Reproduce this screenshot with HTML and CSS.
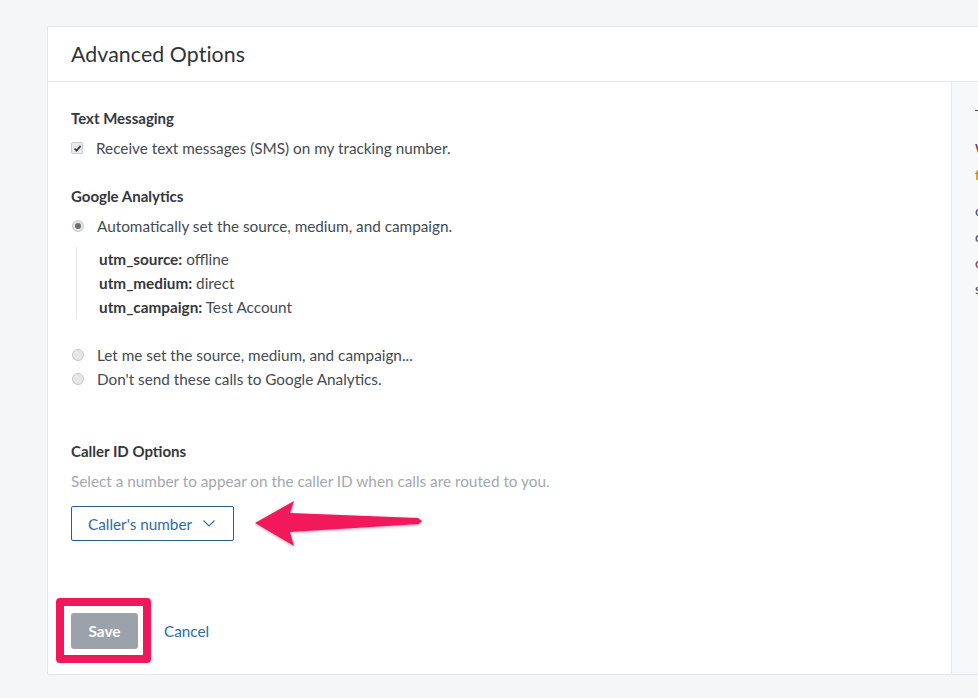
FILE: index.html
```html
<!DOCTYPE html>
<html>
<head>
<meta charset="utf-8">
<link rel="stylesheet" href="styles.css">
</head>
<body>
<div class="page">
  <div class="card">
    <div class="card-header">
      <h2 class="title">Advanced Options</h2>
    </div>
    <div class="card-body">
      <div class="main">
        <h3 class="label">Text Messaging</h3>
        <div class="option">
          <span class="checkbox"><svg width="11" height="11" viewBox="0 0 11 11"><path d="M2.6 5.6 L4.6 7.6 L8.6 2.8" fill="none" stroke="#3a3f45" stroke-width="1.8"/></svg></span>
          <span>Receive text messages (SMS) on my tracking number.</span>
        </div>

        <h3 class="label gap">Google Analytics</h3>
        <div class="option">
          <span class="radio checked"></span>
          <span>Automatically set the source, medium, and campaign.</span>
        </div>
        <div class="utm">
          <div><b>utm_source:</b> offline</div>
          <div><b>utm_medium:</b> direct</div>
          <div><b>utm_campaign:</b> Test Account</div>
        </div>
        <div class="option spaced">
          <span class="radio"></span>
          <span>Let me set the source, medium, and campaign...</span>
        </div>
        <div class="option">
          <span class="radio"></span>
          <span>Don't send these calls to Google Analytics.</span>
        </div>

        <h3 class="label biggap">Caller ID Options</h3>
        <p class="hint">Select a number to appear on the caller ID when calls are routed to you.</p>
        <div class="dropdown-row">
          <button class="dropdown">Caller's number <svg class="chev" width="12" height="7" viewBox="0 0 12 7"><path d="M0.5 0.5 L6 6 L11.5 0.5" fill="none" stroke="#2f6aa6" stroke-width="1.1"/></svg></button>
          <svg class="arrow" width="180" height="60" viewBox="0 0 180 60"><polygon points="3,23 42,1 38,13 166,18 170,21 167,24 38,32 42,46" fill="#f2185c"/></svg>
        </div>

        <div class="actions">
          <div class="highlight"><button class="save">Save</button></div>
          <a class="cancel">Cancel</a>
        </div>
      </div>
      <div class="side">
        <p class="s1">The</p>
        <p class="s2">We</p>
        <p class="s3">fo</p>
        <p class="s4">on</p>
        <p class="s5">co</p>
        <p class="s6">ca</p>
        <p class="s7">se</p>
      </div>
    </div>
  </div>
</div>
</body>
</html>
```

FILE: styles.css
```css
* { box-sizing: border-box; }
html, body { margin: 0; padding: 0; }
body {
  background: #f5f6f8;
  font-family: "Lato", "Liberation Sans", sans-serif;
  font-size: 15.3px;
  color: #444a50;
  width: 978px;
  height: 698px;
  overflow: hidden;
}
.page {
  padding: 26px 0 0 47px;
}
.card {
  width: 960px;
  background: #fff;
  border: 1px solid #e3e6ea;
  border-radius: 2px;
}
.card-header {
  height: 55px;
  border-bottom: 1px solid #e5e8eb;
  padding: 0 23px;
  display: flex;
  align-items: center;
}
.title {
  margin: 0;
  font-size: 21.3px;
  font-weight: 400;
  color: #2f3438;
  letter-spacing: 0.1px;
}
.card-body {
  display: flex;
  height: 592px;
}
.main {
  width: 903px;
  padding: 24px 23px 0 23px;
}
.side {
  flex: 1;
  background: #f6f8fa;
  border-left: 1px solid #e6e9ec;
  padding: 20px 0 0 23px;
  font-size: 14px;
  white-space: nowrap;
  overflow: hidden;
}
.side p { margin: 0; line-height: 26px; color: #444; }
.side .s1 { margin-bottom: 8px; }
.side .s2 { color: #6b2d3a; }
.side .s3 { color: #b5741e; margin-bottom: 10px; }
.side .s6 { color: #8a2a1a; }
.label {
  margin: 0;
  font-size: 15px;
  font-weight: 700;
  line-height: 24px;
  color: #33383d;
}
.label.gap { margin-top: 24px; }
.label.biggap { margin-top: 48px; }
.option {
  display: flex;
  align-items: center;
  height: 24px;
  margin-top: 6px;
}
.option + .option { margin-top: 0; }
.option.spaced { margin-top: 24px; }
.checkbox {
  width: 12px;
  height: 12px;
  border: 1px solid #c9cdd1;
  background: #e8eaec;
  border-radius: 2px;
  margin-right: 13px;
  display: flex;
}
.checkbox svg { margin: -0.5px; }
.radio {
  width: 12px;
  height: 12px;
  border-radius: 50%;
  border: 1px solid #c4c8cc;
  background: #e4e6e8;
  margin: 0 13px 0 1px;
  position: relative;
}
.radio.checked::after {
  content: "";
  position: absolute;
  left: 2px;
  top: 2px;
  width: 6px;
  height: 6px;
  border-radius: 50%;
  background: #6b7075;
}
.utm {
  margin: 9px 0 0 5px;
  border-left: 1px solid #e3e6ea;
  padding-left: 22px;
  line-height: 24px;
}
.utm b { color: #33383d; }
.hint {
  margin: 6px 0 0;
  line-height: 24px;
  color: #a3a8ad;
}
.dropdown-row {
  display: flex;
  align-items: center;
  margin-top: 13px;
  position: relative;
}
.dropdown {
  width: 163px;
  height: 35px;
  border: 1px solid #2a5d8c;
  border-radius: 2px;
  background: #fff;
  color: #2f6aa6;
  font-family: inherit;
  font-size: 15.3px;
  padding: 0 0 0 16px;
  text-align: left;
  display: flex;
  align-items: center;
}
.chev { margin-left: 11px; }
.arrow {
  position: absolute;
  left: 181px;
  top: -6px;
  filter: drop-shadow(0 1px 1.5px rgba(120, 0, 40, 0.35));
}
.actions {
  margin-top: 57px;
  display: flex;
  align-items: center;
}
.highlight {
  margin-left: -15px;
  border: 8px solid #f0185a;
  border-radius: 4px;
  padding: 7px 5px 6px 7px;
  background: #fff;
}
.save {
  width: 67px;
  height: 36px;
  border: none;
  border-radius: 3px;
  background: #9ba2a9;
  color: #fff;
  font-family: inherit;
  font-size: 15.3px;
  font-weight: 700;
  display: block;
}
.cancel {
  margin-left: 13px;
  color: #2f6aa6;
  font-size: 15.3px;
  line-height: 24px;
}
```
